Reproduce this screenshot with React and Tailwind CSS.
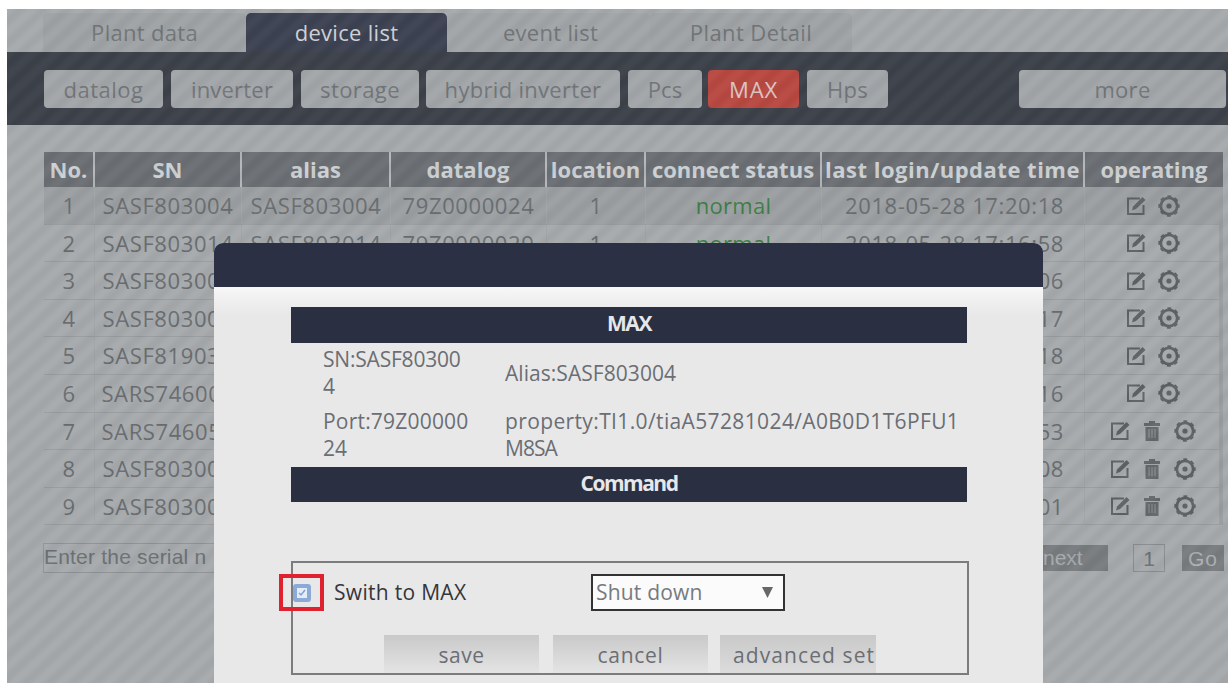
const rows = [
  { sn: "SASF803004", alias: "SASF803004", datalog: "79Z0000024", location: 1, status: "normal", time: "2018-05-28 17:20:18" },
  { sn: "SASF803014", alias: "SASF803014", datalog: "79Z0000029", location: 1, status: "normal", time: "2018-05-28 17:16:58" },
  { sn: "SASF803006", time: "06" },
  { sn: "SASF803007", time: "17" },
  { sn: "SASF819035", time: "18" },
  { sn: "SARS746008", time: "16" },
  { sn: "SARS746059", time: "53", removable: true },
  { sn: "SASF803008", time: "08", removable: true },
  { sn: "SASF803009", time: "01", removable: true },
];

const cols = "grid grid-cols-[51px_147px_149px_156px_99px_176px_263px_138px]";

export default function App() {
  return (
    <div className="h-[684px] w-[1231px] overflow-hidden bg-white pt-[9px] pl-[7px] font-['Open_Sans','Noto_Sans',sans-serif]">
      <div className="relative h-[674px] w-[1221px] overflow-hidden bg-[#a6a9ab]">
        {/* Tabs */}
        <div className="flex h-[43px] items-end pl-9">
          <Tab label="Plant data" className="w-[203px] bg-[#9fa2a4] text-[#707477]" text="tracking-[0.3px]" />
          <Tab label="device list" className="w-[201px] bg-[#3b4050] font-medium text-[#cfd2d6]" text="tracking-[0.3px]" />
          <Tab label="event list" className="w-[203px] bg-[#a1a4a6] pl-1 text-[#707477]" text="tracking-[0.3px]" />
          <Tab label="Plant Detail" className="w-[202px] bg-[#9fa2a4] text-[#707477]" text="tracking-[0.4px]" />
        </div>

        {/* Device types */}
        <div className="flex h-[73px] items-center bg-[#3a3f48] pr-0.5 pl-[37px]">
          <TypeButton label="datalog" className="w-[119px]" text="tracking-[0.5px]" />
          <TypeButton label="inverter" className="ml-2 w-[122px]" text="tracking-[0.2px]" />
          <TypeButton label="storage" className="ml-2 w-[118px]" text="tracking-[0.4px]" />
          <TypeButton label="hybrid inverter" className="ml-[7px] w-[194px]" text="tracking-[0.3px]" />
          <TypeButton label="Pcs" className="ml-2 w-[74px]" />
          <TypeButton label="MAX" active className="ml-1.5 w-[91px]" text="tracking-[0.8px]" />
          <TypeButton label="Hps" className="ml-2 w-[81px]" text="tracking-[0.2px]" />
          <TypeButton label="more" className="ml-auto w-[207px]" text="tracking-[0.3px]" />
        </div>

        {/* Device table */}
        <div className="mt-[27px] ml-[37px] w-[1179px]">
          <div className={`${cols} h-[35px] bg-[#6a6e72] text-[22px] leading-[35px] font-bold text-[#cdd0d2]`}>
            <Head label="No." />
            <Head label="SN" />
            <Head label="alias" />
            <Head label="datalog" />
            <Head label="location" />
            <Head label="connect status" />
            <Head label="last login/update time" text="tracking-[0.5px]" />
            <Head label="operating" last />
          </div>
          {rows.map((row, i) => (
            <div
              key={row.sn}
              className={`${cols} h-[37.6px] border-b border-[#989b9d] text-[22px] leading-[37px] tracking-[0.6px] text-[#686c6f] ${i === 0 ? "bg-[#9b9ea0]" : ""}`}
            >
              <Cell>{i + 1}</Cell>
              <Cell>{row.sn}</Cell>
              <Cell>{row.alias}</Cell>
              <Cell>{row.datalog}</Cell>
              <Cell>{row.location}</Cell>
              <Cell><span className="tracking-[0.3px] text-[#3c7d44]">{row.status}</span></Cell>
              <div className="flex justify-end border-r border-[#a0a3a5] pr-5 whitespace-nowrap">{row.time}</div>
              <div className="flex items-center justify-center gap-3 border-r-4 border-[#999c9e] pl-0.5">
                <EditIcon />
                {row.removable && <TrashIcon />}
                <GearIcon />
              </div>
            </div>
          ))}
        </div>

        {/* Search and paging */}
        <div className="mt-[18px] ml-[36px] flex h-[30px] items-center font-['Liberation_Sans',sans-serif] text-[21px] text-[#6b6f72]">
          <div className="flex h-[30px] w-[172px] items-center overflow-hidden border border-[#8d9193] pb-1 tracking-[0.2px] whitespace-nowrap">Enter the serial n</div>
          <div className="ml-auto h-[26px] w-[90px] bg-[#777b7e] pl-[25px] leading-[26px] text-[#a7aaac]">next</div>
          <div className="ml-[25px] h-[28px] w-[32px] border border-[#888c8e] text-center leading-[27px]">1</div>
          <div className="mr-[4px] ml-[17px] h-[26px] w-[42px] bg-[#777b7e] text-center leading-[28px] tracking-[1px] text-[#adb0b2]">Go</div>
        </div>

        {/* Striped backdrop */}
        <div className="absolute inset-0 bg-[repeating-linear-gradient(137deg,rgba(255,255,255,0.035)_0px,rgba(255,255,255,0.035)_3px,rgba(60,70,80,0.04)_8px,rgba(60,70,80,0.04)_11px,rgba(255,255,255,0.035)_16px)]" />

        <Dialog />
      </div>
    </div>
  );
}

function Dialog() {
  return (
    <div className="absolute top-[234px] left-[207px] h-[440px] w-[829px] overflow-hidden rounded-t-[9px] bg-[#e8e8e8] text-[21px] text-[#6b6e74]">
      <div className="h-[44px] bg-[#2c3044]" />
      <div className="h-[396px] bg-[linear-gradient(#f6f7f6_0px,#e8e8e8_28px)] px-[77px] pt-5">
        <Bar label="MAX" text="tracking-[-1.4px]" />
        <div className="grid h-[124px] grid-cols-[182px_1fr] grid-rows-[61px_63px] items-center pl-8 leading-[27px]">
          <div><div className="tracking-[-0.2px]">SN:SASF80300</div><div>4</div></div>
          <div className="tracking-[0.05px]">Alias:SASF803004</div>
          <div><div className="tracking-[0.2px]">Port:79Z00000</div><div>24</div></div>
          <div className="whitespace-nowrap"><div className="tracking-[0.37px]">property:TI1.0/tiaA57281024/A0B0D1T6PFU1</div><div className="tracking-[-1px]">M8SA</div></div>
        </div>
        <Bar label="Command" text="tracking-[-1.5px]" />

        <div className="mt-[59px] h-[114px] w-[678px] border-2 border-[#7b7c7e]">
          <div className="flex items-start pt-[11px]">
            <div className="-ml-[14px] flex h-[37px] w-[45px] items-center justify-center border-4 border-[#e0212f]">
              <div className="flex h-[18px] w-[18px] items-center justify-center rounded-[3px] border-4 border-[#8daad6] bg-[#e4edf7]">
                <svg viewBox="0 0 8 8" className="h-2 w-2" fill="none" stroke="#7fa2d2" strokeWidth="1.500"><path d="M1 4l2 2 4-5" /></svg>
              </div>
            </div>
            <div className="ml-2.5 w-[257px] leading-[36px] tracking-[0.3px] text-[#34363b]">Swith to MAX</div>
            <div className="flex h-[37px] w-[194px] items-center justify-between border-2 border-[#333] bg-[#fbfbfb] pr-2.5 pl-[3px]">
              <span className="tracking-[0.2px] text-[#777a7e]">Shut down</span>
              <svg viewBox="0 0 11 11" className="h-[11px] w-[11px]" fill="#65676a"><path d="M0 0h11L5.500 11z" /></svg>
            </div>
          </div>
          <div className="mt-[24px] flex pl-[91px] text-center leading-[41px] whitespace-nowrap">
            <div className="h-[38px] w-[155px] bg-gradient-to-b from-[#c9c9c9] to-[#e4e4e4] tracking-[0.5px]">save</div>
            <div className="ml-3.5 h-[38px] w-[155px] bg-gradient-to-b from-[#c9c9c9] to-[#e4e4e4] tracking-[0.7px]">cancel</div>
            <div className="ml-3 h-[38px] w-[156px] bg-gradient-to-b from-[#c9c9c9] to-[#dcdcdc] pl-[13px] text-left tracking-[1.1px]">advanced set</div>
          </div>
        </div>
      </div>
    </div>
  );
}

function Bar({ label, text }) {
  return (
    <div className="h-[35.5px] w-[676px] bg-[#2a3042] text-center leading-[33px] font-bold text-[#e6e7ea]">
      <span className={text}>{label}</span>
    </div>
  );
}

function Tab({ label, className, text }) {
  return (
    <div className={`h-[39px] rounded-t-[5px] text-center text-[22px] leading-[39px] ${className}`}>
      <span className={text}>{label}</span>
    </div>
  );
}

function TypeButton({ label, active, className, text }) {
  const color = active ? "bg-[#b8473f] text-[#dcc5c3]" : "bg-[#a2a5a8] text-[#707477]";
  return (
    <div className={`h-[38px] shrink-0 rounded-[4px] text-center text-[22px] leading-[39px] ${color} ${className}`}>
      <span className={text}>{label}</span>
    </div>
  );
}

function Head({ label, last, text }) {
  return (
    <div className={`flex justify-center whitespace-nowrap ${last ? "" : "border-r-2 border-[#b4b7b9]"}`}>
      <span className={text}>{label}</span>
    </div>
  );
}

function Cell({ children }) {
  return <div className="flex justify-center border-r border-[#a0a3a5] whitespace-nowrap">{children}</div>;
}

function EditIcon() {
  return (
    <svg viewBox="0 0 20 20" className="h-5 w-5" fill="none" stroke="#5c6063" strokeWidth="2">
      <path d="M14 2.500H2v15.500h15.500V9" />
      <path d="M6 14.500l1-4L16.500 1l3 3L10 13z" fill="#5c6063" stroke="none" />
    </svg>
  );
}

function TrashIcon() {
  return (
    <svg viewBox="0 0 20 20" className="h-5 w-5" fill="#63676a">
      <path d="M7 0h6v2h5v3H2V2h5zM3.500 6h13v14h-13z" />
      <path d="M7 8v9M10 8v9M13 8v9" stroke="#8f9395" strokeWidth="1" />
    </svg>
  );
}

function GearIcon() {
  return (
    <svg viewBox="0 0 22 22" className="h-[22px] w-[22px]" fill="none" stroke="#5c6063">
      <circle cx="11" cy="11" r="8.200" strokeWidth="2.800" />
      <circle cx="11" cy="11" r="9.800" strokeWidth="1.800" strokeDasharray="4 3.697" strokeDashoffset="2" />
      <circle cx="11" cy="11" r="2.600" fill="#5c6063" stroke="none" />
    </svg>
  );
}
